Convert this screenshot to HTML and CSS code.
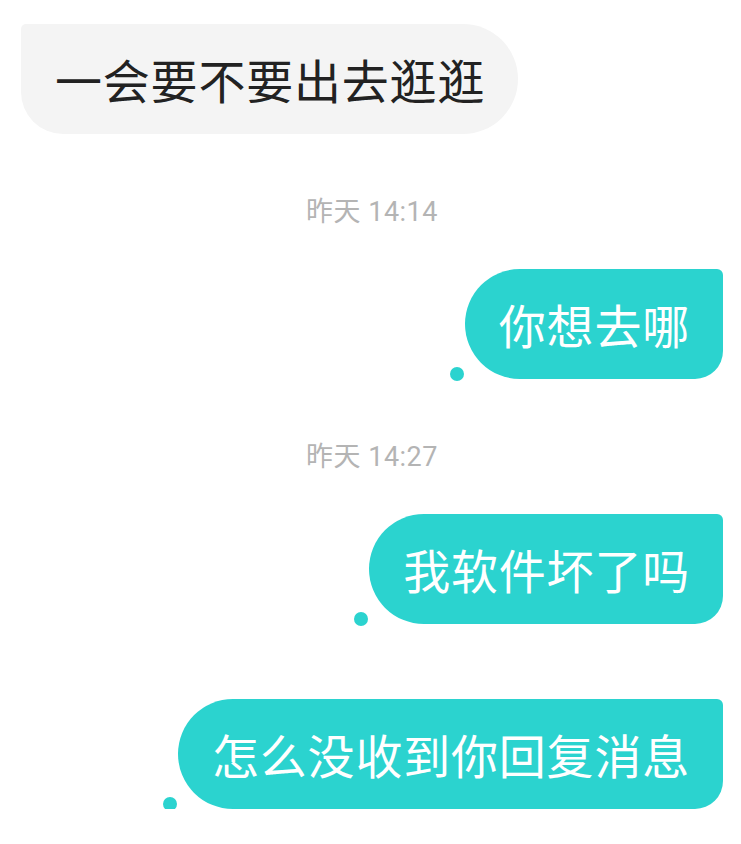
FILE: index.html
```html
<!DOCTYPE html>
<html lang="zh-CN">

<head>
    <meta charset="UTF-8">
    <meta name="viewport" content="width=device-width, initial-scale=1.0">
    <title>聊天</title>

    <link rel="stylesheet" href="styles.css">
</head>

<body>

    <div class="chat">

        <div class="row left">
            <div class="bubble gray">一会要不要出去逛逛</div>
        </div>

        <div class="time">昨天 14:14</div>

        <div class="row right">
            <span class="dot"></span>
            <div class="bubble teal">你想去哪</div>
        </div>

        <div class="time">昨天 14:27</div>

        <div class="row right">
            <span class="dot"></span>
            <div class="bubble teal">我软件坏了吗</div>
        </div>

        <div class="row right next">
            <span class="dot"></span>
            <div class="bubble teal">怎么没收到你回复消息</div>
        </div>

    </div>

</body>

</html>
```

FILE: styles.css
```css
* {
    margin: 0;
    padding: 0;
}

body {
    background-color: white;
    font-family: "Noto Sans CJK SC", "Noto Sans", sans-serif;
}

.chat {
    display: flex;
    flex-direction: column;
    padding: 24px 18px 0 21px;
}

.row {
    display: flex;
    align-items: flex-end;
}

.row.right {
    justify-content: flex-end;
}

.row.next {
    margin-top: 75px;
}

.bubble {
    font-size: 47px;
    line-height: 48px;
    letter-spacing: 0.8px;
    padding: 31px 33px 31px 34px;
    white-space: nowrap;
}

.gray {
    background-color: #f4f4f4;
    color: #222222;
    border-radius: 5px 55px 55px 42px;
}

.teal {
    background-color: #2bd3cf;
    color: white;
    border-radius: 55px 6px 28px 55px;
}

.dot {
    width: 14px;
    height: 14px;
    border-radius: 50%;
    background-color: #2bd3cf;
    margin-right: 1px;
    margin-bottom: -2px;
}

.time {
    font-family: Roboto, "Noto Sans CJK SC", sans-serif;
    font-size: 27px;
    line-height: 30px;
    letter-spacing: 0.5px;
    color: #b4b4b4;
    text-align: center;
    margin: 63px 0 42px;
}
```
